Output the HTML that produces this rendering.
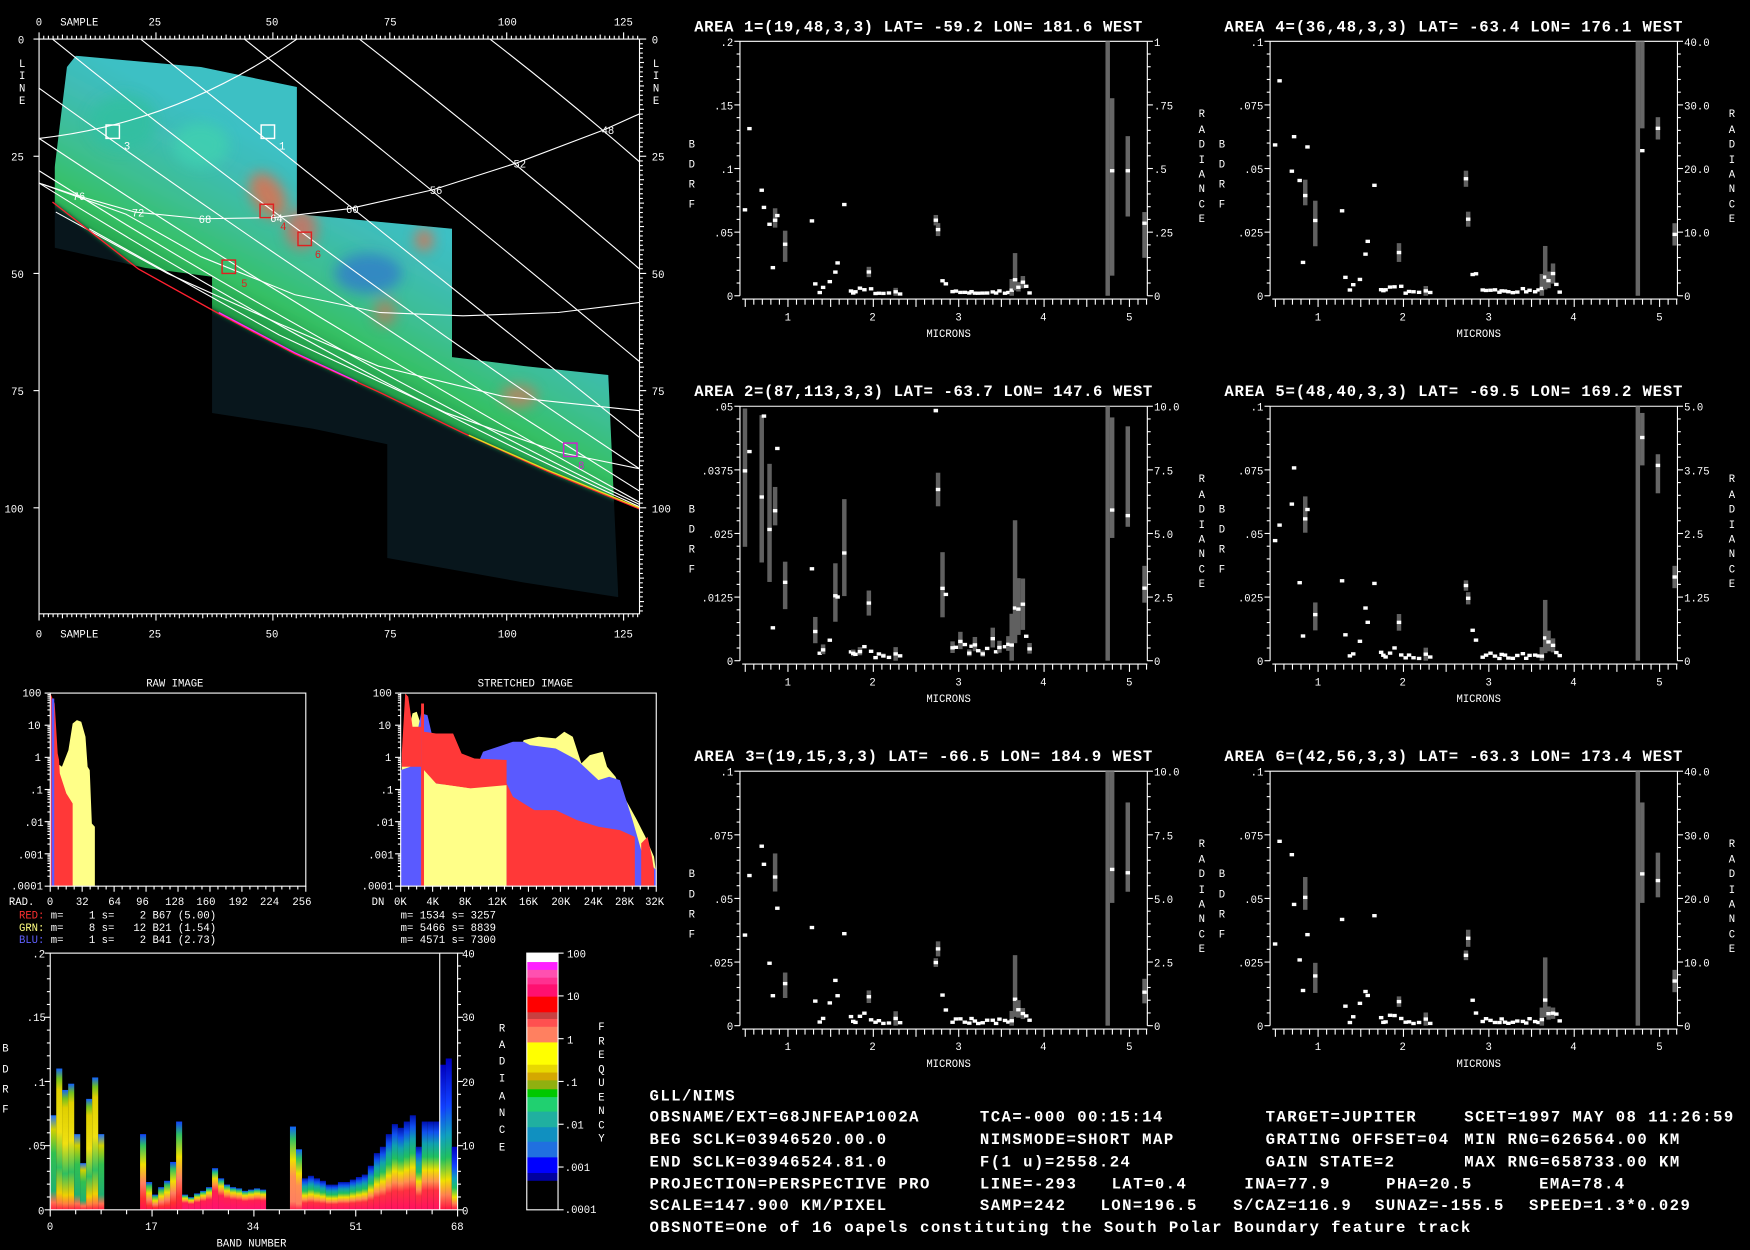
<!DOCTYPE html>
<html><head><meta charset="utf-8"><style>
html,body{margin:0;padding:0;background:#000;overflow:hidden}
svg{display:block}
text{font-family:"Liberation Mono",monospace;fill:#fff}
.s{font-size:9.5px}
.t{font-size:14px;font-weight:bold;letter-spacing:0.55px}
.f{font-size:14px;font-weight:bold;letter-spacing:1.3px}
</style></head><body>
<svg id="sv" width="1750" height="1250" viewBox="0 0 1568 1120" preserveAspectRatio="none" xmlns="http://www.w3.org/2000/svg">
<defs>
<filter id="bl" x="-10%" y="-10%" width="120%" height="120%"><feGaussianBlur stdDeviation="2.2"/></filter>
<filter id="bl2" x="-50%" y="-50%" width="200%" height="200%"><feGaussianBlur stdDeviation="6"/></filter>
<clipPath id="patch"><polygon points="68,50 180,60 266,78 266,192 300,195 405,205 405,320 470,328 545,336 554,535 470,522 347,500 347,398 280,384 190,370 190,248 130,240 49,222 49,150 60,60"/></clipPath>
<clipPath id="above"><polygon points="0,0 600,0 600,456 573,456 490,422 415,388 339,351 264,317 196,281 124,241 47,181 0,170"/></clipPath>
<linearGradient id="lg" gradientUnits="userSpaceOnUse" x1="300" y1="344" x2="375" y2="200">
<stop offset="0" stop-color="#0a3a20"/><stop offset="0.07" stop-color="#1f9a45"/><stop offset="0.25" stop-color="#35c064"/><stop offset="0.5" stop-color="#3cbf90"/><stop offset="0.8" stop-color="#3fbcb5"/><stop offset="1" stop-color="#3cc0c4"/></linearGradient>
<linearGradient id="gA" x1="0" y1="1" x2="0" y2="0"><stop offset="0" stop-color="#ff2040"/><stop offset="0.05" stop-color="#ff8040"/><stop offset="0.12" stop-color="#f0d000"/><stop offset="0.3" stop-color="#30c060"/><stop offset="0.55" stop-color="#f0e010"/><stop offset="0.85" stop-color="#e0d000"/><stop offset="0.93" stop-color="#70c020"/><stop offset="1" stop-color="#1060ff"/></linearGradient>
<linearGradient id="gA2" x1="0" y1="1" x2="0" y2="0"><stop offset="0" stop-color="#ff2040"/><stop offset="0.08" stop-color="#ff7050"/><stop offset="0.2" stop-color="#20b070"/><stop offset="0.6" stop-color="#30c050"/><stop offset="0.85" stop-color="#d0d000"/><stop offset="1" stop-color="#2070ff"/></linearGradient>
<linearGradient id="gB" x1="0" y1="1" x2="0" y2="0"><stop offset="0" stop-color="#ff1050"/><stop offset="0.15" stop-color="#ff3030"/><stop offset="0.35" stop-color="#ff8060"/><stop offset="0.6" stop-color="#f0e000"/><stop offset="0.85" stop-color="#30c060"/><stop offset="1" stop-color="#1040ff"/></linearGradient>
<linearGradient id="gC" x1="0" y1="1" x2="0" y2="0"><stop offset="0" stop-color="#ff1070"/><stop offset="0.45" stop-color="#ff2050"/><stop offset="0.6" stop-color="#ff9040"/><stop offset="0.75" stop-color="#f0e000"/><stop offset="0.9" stop-color="#20c080"/><stop offset="1" stop-color="#1040ff"/></linearGradient>
<linearGradient id="gD" x1="0" y1="1" x2="0" y2="0"><stop offset="0" stop-color="#ff2050"/><stop offset="0.1" stop-color="#ff8060"/><stop offset="0.4" stop-color="#ff9050"/><stop offset="0.6" stop-color="#f0e000"/><stop offset="0.85" stop-color="#30c060"/><stop offset="1" stop-color="#1060ff"/></linearGradient>
<linearGradient id="gE" x1="0" y1="1" x2="0" y2="0"><stop offset="0" stop-color="#ff1060"/><stop offset="0.22" stop-color="#ff3040"/><stop offset="0.32" stop-color="#ff9050"/><stop offset="0.45" stop-color="#f0e000"/><stop offset="0.6" stop-color="#20c060"/><stop offset="0.75" stop-color="#10a0b0"/><stop offset="0.88" stop-color="#1050f0"/><stop offset="1" stop-color="#0010b0"/></linearGradient>
<linearGradient id="gF" x1="0" y1="1" x2="0" y2="0"><stop offset="0" stop-color="#ff1040"/><stop offset="0.1" stop-color="#ff8050"/><stop offset="0.2" stop-color="#f0e000"/><stop offset="0.35" stop-color="#20c060"/><stop offset="0.5" stop-color="#10a0c0"/><stop offset="0.7" stop-color="#1040ff"/><stop offset="1" stop-color="#0000c0"/></linearGradient>
</defs>
<rect width="1568" height="1120" fill="#000"/>

<!-- MAP -->
<g clip-path="url(#patch)">
<rect x="0" y="0" width="600" height="600" fill="#08161c"/>
<g filter="url(#bl)">
<rect x="0" y="0" width="600" height="600" fill="url(#lg)" clip-path="url(#above)"/>
</g>
<g filter="url(#bl2)" clip-path="url(#above)" opacity="0.85">
<ellipse cx="240" cy="175" rx="14" ry="22" fill="#e07050" transform="rotate(-30 240 175)"/>
<ellipse cx="270" cy="205" rx="14" ry="18" fill="#d07060"/>
<ellipse cx="380" cy="215" rx="8" ry="10" fill="#e07050"/>
<ellipse cx="345" cy="280" rx="10" ry="12" fill="#b08060"/>
<ellipse cx="465" cy="355" rx="16" ry="10" fill="#c08060"/>
<ellipse cx="110" cy="110" rx="30" ry="25" fill="#30c0a0"/>
<ellipse cx="180" cy="130" rx="25" ry="20" fill="#40d0b0"/>
<ellipse cx="330" cy="245" rx="30" ry="18" fill="#3080c8"/>
</g>
</g>
<g fill="none" stroke="#fff" stroke-width="1">
<path d="M439 35 Q510 90 573 145"/>
<path d="M322 35 Q450 135 573 241"/>
<path d="M219 35 Q400 180 573 324"/>
<path d="M126 35 Q350 215 573 392"/>
<path d="M47 35 Q300 240 573 420"/>
<path d="M35 79 Q300 270 573 440"/>
<path d="M35 124 Q300 300 573 450"/>
<path d="M35 153 Q300 320 573 452"/>
<path d="M35 164 Q300 330 573 454"/>
<path d="M35 124 Q160 110 266 35"/>
<polyline points="573,102 542,116 463,146 388,170 313,187 245,195 181,196 121,190 68,175 38,165"/>
<polyline points="35,164 113,192 180,230 264,264 340,280 415,283 500,280 573,271"/>
<polyline points="50,190 150,245 250,290 339,328 450,355 573,368"/>
<polyline points="80,205 250,300 400,370 500,405 573,420"/>
</g>
<polyline points="47,181 124,241 196,281 264,317 339,351 415,388 490,422 573,456" fill="none" stroke="#ff2030" stroke-width="1.2"/>
<polyline points="196,280 264,316 320,342" fill="none" stroke="#ff30ff" stroke-width="1.2"/>
<polyline points="420,390 490,421 573,455" fill="none" stroke="#e0e020" stroke-width="1.2"/>
<g fill="none" stroke-width="1.3">
<rect x="95" y="112" width="12" height="12" stroke="#fff"/>
<rect x="234" y="112" width="12" height="12" stroke="#fff"/>
<rect x="233" y="183" width="12" height="12" stroke="#e02020"/>
<rect x="267" y="208" width="12" height="12" stroke="#e02020"/>
<rect x="199" y="233" width="12" height="12" stroke="#e02020"/>
<rect x="505" y="397" width="12" height="12" stroke="#d020d0"/>
</g>
<g class="s">
<text x="111" y="134" fill="#fff">3</text><text x="250" y="134">1</text>
<text x="251" y="206" style="fill:#e02020">4</text><text x="282" y="231" style="fill:#e02020">6</text><text x="216" y="257" style="fill:#e02020">5</text><text x="518" y="420" style="fill:#d020d0">8</text>
<text x="539" y="120">48</text><text x="460" y="150">52</text><text x="385" y="174">56</text><text x="310" y="191">60</text><text x="242" y="199">64</text><text x="178" y="200">68</text><text x="118" y="194">72</text><text x="65" y="179">76</text>
</g>
<rect x="35" y="35" width="538" height="515" fill="none" stroke="#fff" stroke-width="1"/>
<g id="mapticks" stroke="#fff" stroke-width="1"></g>
<g class="s">
<text x="32" y="23">0</text><text x="54" y="23">SAMPLE</text><text x="133" y="23">25</text><text x="238" y="23">50</text><text x="344" y="23">75</text><text x="446" y="23">100</text><text x="550" y="23">125</text>
<text x="32" y="571">0</text><text x="54" y="571">SAMPLE</text><text x="133" y="571">25</text><text x="238" y="571">50</text><text x="344" y="571">75</text><text x="446" y="571">100</text><text x="550" y="571">125</text>
<text x="16" y="39">0</text><text x="10" y="144">25</text><text x="10" y="249">50</text><text x="10" y="354">75</text><text x="4" y="459">100</text>
<text x="584" y="39">0</text><text x="584" y="144">25</text><text x="584" y="249">50</text><text x="584" y="354">75</text><text x="584" y="459">100</text>
<text x="17" y="60">L</text><text x="17" y="71">I</text><text x="17" y="82">N</text><text x="17" y="93">E</text>
<text x="585" y="60">L</text><text x="585" y="71">I</text><text x="585" y="82">N</text><text x="585" y="93">E</text>
</g>

<!-- HISTOGRAMS -->
<g id="hist"></g>
<g fill="none" stroke="#fff"><rect x="45" y="621" width="229" height="173"/><rect x="359" y="621" width="229" height="173"/></g>
<g id="histticks" stroke="#fff"></g>
<g class="s">
<text x="131" y="615">RAW IMAGE</text><text x="428" y="615">STRETCHED IMAGE</text>
<text x="20" y="624">100</text><text x="25" y="653">10</text><text x="31" y="682">1</text><text x="27" y="711">.1</text><text x="22" y="740">.01</text><text x="16" y="769">.001</text><text x="10" y="797">.0001</text>
<text x="334" y="624">100</text><text x="339" y="653">10</text><text x="345" y="682">1</text><text x="341" y="711">.1</text><text x="336" y="740">.01</text><text x="330" y="769">.001</text><text x="324" y="797">.0001</text>
<text x="8" y="811">RAD.</text><text x="42" y="811">0</text><text x="68" y="811">32</text><text x="97" y="811">64</text><text x="122" y="811">96</text><text x="148" y="811">128</text><text x="176" y="811">160</text><text x="205" y="811">192</text><text x="233" y="811">224</text><text x="262" y="811">256</text>
<text x="333" y="811">DN</text><text x="353" y="811">0K</text><text x="382" y="811">4K</text><text x="411" y="811">8K</text><text x="437" y="811">12K</text><text x="465" y="811">16K</text><text x="494" y="811">20K</text><text x="523" y="811">24K</text><text x="551" y="811">28K</text><text x="578" y="811">32K</text>
<text x="17" y="823" xml:space="preserve"><tspan style="fill:#ff3030">RED:</tspan> m=    1 s=    2 B67 (5.00)</text>
<text x="17" y="834" xml:space="preserve"><tspan style="fill:#ffff80">GRN:</tspan> m=    8 s=   12 B21 (1.54)</text>
<text x="17" y="845" xml:space="preserve"><tspan style="fill:#6060ff">BLU:</tspan> m=    1 s=    2 B41 (2.73)</text>
<text x="359" y="823" xml:space="preserve">m= 1534 s= 3257</text>
<text x="359" y="834" xml:space="preserve">m= 5466 s= 8839</text>
<text x="359" y="845" xml:space="preserve">m= 4571 s= 7300</text>
</g>

<!-- BAND SPECTRUM -->
<g id="bands"></g>
<g fill="none" stroke="#fff"><rect x="45" y="854" width="365" height="230"/><line x1="394" y1="854" x2="394" y2="1084"/></g>
<g id="bandticks" stroke="#fff"></g>
<g id="cbar"></g>
<rect x="472" y="854" width="28" height="230" fill="none" stroke="#fff"/>
<g class="s">
<text x="29" y="858">.2</text><text x="24" y="915">.15</text><text x="29" y="973">.1</text><text x="24" y="1030">.05</text><text x="34" y="1088">0</text>
<text x="414" y="858">40</text><text x="414" y="915">30</text><text x="414" y="973">20</text><text x="414" y="1030">10</text><text x="414" y="1088">0</text>
<text x="42" y="1102">0</text><text x="130" y="1102">17</text><text x="221" y="1102">34</text><text x="313" y="1102">51</text><text x="404" y="1102">68</text>
<text x="194" y="1117">BAND NUMBER</text>
<text x="2" y="942">B</text><text x="2" y="961">D</text><text x="2" y="979">R</text><text x="2" y="997">F</text>
<text x="447" y="924">R</text><text x="447" y="939">A</text><text x="447" y="954">D</text><text x="447" y="969">I</text><text x="447" y="985">A</text><text x="447" y="1000">N</text><text x="447" y="1015">C</text><text x="447" y="1031">E</text>
<text x="536" y="923">F</text><text x="536" y="936">R</text><text x="536" y="948">E</text><text x="536" y="961">Q</text><text x="536" y="973">U</text><text x="536" y="986">E</text><text x="536" y="998">N</text><text x="536" y="1011">C</text><text x="536" y="1023">Y</text>
<text x="508" y="858">100</text><text x="508" y="896">10</text><text x="508" y="935">1</text><text x="506" y="973">.1</text><text x="506" y="1011">.01</text><text x="506" y="1049">.001</text><text x="506" y="1087">.0001</text>
</g>

<!-- SPECTRUM PLOTS -->
<g id="plots"></g>
<g class="t">
<text x="622" y="28" textLength="402">AREA 1=(19,48,3,3) LAT= -59.2 LON= 181.6 WEST</text>
<text x="1097" y="28" textLength="411">AREA 4=(36,48,3,3) LAT= -63.4 LON= 176.1 WEST</text>
<text x="622" y="355" textLength="411">AREA 2=(87,113,3,3) LAT= -63.7 LON= 147.6 WEST</text>
<text x="1097" y="355" textLength="411">AREA 5=(48,40,3,3) LAT= -69.5 LON= 169.2 WEST</text>
<text x="622" y="682" textLength="411">AREA 3=(19,15,3,3) LAT= -66.5 LON= 184.9 WEST</text>
<text x="1097" y="682" textLength="411">AREA 6=(42,56,3,3) LAT= -63.3 LON= 173.4 WEST</text>
</g>
<g class="s" text-anchor="end">
<g><text x="657" y="41">.2</text><text x="657" y="98">.15</text><text x="657" y="155">.1</text><text x="657" y="212">.05</text><text x="657" y="269">0</text></g>
<g transform="translate(475,0)"><text x="657" y="41">.1</text><text x="657" y="98">.075</text><text x="657" y="155">.05</text><text x="657" y="212">.025</text><text x="657" y="269">0</text></g>
<g transform="translate(0,327)"><text x="657" y="41">.05</text><text x="657" y="98">.0375</text><text x="657" y="155">.025</text><text x="657" y="212">.0125</text><text x="657" y="269">0</text></g>
<g transform="translate(475,327)"><text x="657" y="41">.1</text><text x="657" y="98">.075</text><text x="657" y="155">.05</text><text x="657" y="212">.025</text><text x="657" y="269">0</text></g>
<g transform="translate(0,654)"><text x="657" y="41">.1</text><text x="657" y="98">.075</text><text x="657" y="155">.05</text><text x="657" y="212">.025</text><text x="657" y="269">0</text></g>
<g transform="translate(475,654)"><text x="657" y="41">.1</text><text x="657" y="98">.075</text><text x="657" y="155">.05</text><text x="657" y="212">.025</text><text x="657" y="269">0</text></g>
</g>
<g class="s">
<g><text x="1034" y="41">1</text><text x="1034" y="98">.75</text><text x="1034" y="155">.5</text><text x="1034" y="212">.25</text><text x="1034" y="269">0</text></g>
<g transform="translate(475,0)"><text x="1034" y="41">40.0</text><text x="1034" y="98">30.0</text><text x="1034" y="155">20.0</text><text x="1034" y="212">10.0</text><text x="1034" y="269">0</text></g>
<g transform="translate(0,327)"><text x="1034" y="41">10.0</text><text x="1034" y="98">7.5</text><text x="1034" y="155">5.0</text><text x="1034" y="212">2.5</text><text x="1034" y="269">0</text></g>
<g transform="translate(475,327)"><text x="1034" y="41">5.0</text><text x="1034" y="98">3.75</text><text x="1034" y="155">2.5</text><text x="1034" y="212">1.25</text><text x="1034" y="269">0</text></g>
<g transform="translate(0,654)"><text x="1034" y="41">10.0</text><text x="1034" y="98">7.5</text><text x="1034" y="155">5.0</text><text x="1034" y="212">2.5</text><text x="1034" y="269">0</text></g>
<g transform="translate(475,654)"><text x="1034" y="41">40.0</text><text x="1034" y="98">30.0</text><text x="1034" y="155">20.0</text><text x="1034" y="212">10.0</text><text x="1034" y="269">0</text></g>
</g>
<g class="s" id="common">
<g><text x="703" y="287">1</text><text x="779" y="287">2</text><text x="856" y="287">3</text><text x="932" y="287">4</text><text x="1009" y="287">5</text><text x="830" y="302">MICRONS</text><text x="617" y="132">B</text><text x="617" y="150">D</text><text x="617" y="168">R</text><text x="617" y="186">F</text><text x="1074" y="105">R</text><text x="1074" y="119">A</text><text x="1074" y="132">D</text><text x="1074" y="146">I</text><text x="1074" y="159">A</text><text x="1074" y="172">N</text><text x="1074" y="186">C</text><text x="1074" y="199">E</text></g>
<g transform="translate(475,0)"><text x="703" y="287">1</text><text x="779" y="287">2</text><text x="856" y="287">3</text><text x="932" y="287">4</text><text x="1009" y="287">5</text><text x="830" y="302">MICRONS</text><text x="617" y="132">B</text><text x="617" y="150">D</text><text x="617" y="168">R</text><text x="617" y="186">F</text><text x="1074" y="105">R</text><text x="1074" y="119">A</text><text x="1074" y="132">D</text><text x="1074" y="146">I</text><text x="1074" y="159">A</text><text x="1074" y="172">N</text><text x="1074" y="186">C</text><text x="1074" y="199">E</text></g>
<g transform="translate(0,327)"><text x="703" y="287">1</text><text x="779" y="287">2</text><text x="856" y="287">3</text><text x="932" y="287">4</text><text x="1009" y="287">5</text><text x="830" y="302">MICRONS</text><text x="617" y="132">B</text><text x="617" y="150">D</text><text x="617" y="168">R</text><text x="617" y="186">F</text><text x="1074" y="105">R</text><text x="1074" y="119">A</text><text x="1074" y="132">D</text><text x="1074" y="146">I</text><text x="1074" y="159">A</text><text x="1074" y="172">N</text><text x="1074" y="186">C</text><text x="1074" y="199">E</text></g>
<g transform="translate(475,327)"><text x="703" y="287">1</text><text x="779" y="287">2</text><text x="856" y="287">3</text><text x="932" y="287">4</text><text x="1009" y="287">5</text><text x="830" y="302">MICRONS</text><text x="617" y="132">B</text><text x="617" y="150">D</text><text x="617" y="168">R</text><text x="617" y="186">F</text><text x="1074" y="105">R</text><text x="1074" y="119">A</text><text x="1074" y="132">D</text><text x="1074" y="146">I</text><text x="1074" y="159">A</text><text x="1074" y="172">N</text><text x="1074" y="186">C</text><text x="1074" y="199">E</text></g>
<g transform="translate(0,654)"><text x="703" y="287">1</text><text x="779" y="287">2</text><text x="856" y="287">3</text><text x="932" y="287">4</text><text x="1009" y="287">5</text><text x="830" y="302">MICRONS</text><text x="617" y="132">B</text><text x="617" y="150">D</text><text x="617" y="168">R</text><text x="617" y="186">F</text><text x="1074" y="105">R</text><text x="1074" y="119">A</text><text x="1074" y="132">D</text><text x="1074" y="146">I</text><text x="1074" y="159">A</text><text x="1074" y="172">N</text><text x="1074" y="186">C</text><text x="1074" y="199">E</text></g>
<g transform="translate(475,654)"><text x="703" y="287">1</text><text x="779" y="287">2</text><text x="856" y="287">3</text><text x="932" y="287">4</text><text x="1009" y="287">5</text><text x="830" y="302">MICRONS</text><text x="617" y="132">B</text><text x="617" y="150">D</text><text x="617" y="168">R</text><text x="617" y="186">F</text><text x="1074" y="105">R</text><text x="1074" y="119">A</text><text x="1074" y="132">D</text><text x="1074" y="146">I</text><text x="1074" y="159">A</text><text x="1074" y="172">N</text><text x="1074" y="186">C</text><text x="1074" y="199">E</text></g>
</g>

<!-- FOOTER -->
<g class="f">
<text x="582" y="986">GLL/NIMS</text>
<text x="582" y="1005">OBSNAME/EXT=G8JNFEAP1002A</text><text x="878" y="1005">TCA=-000 00:15:14</text><text x="1134" y="1005">TARGET=JUPITER</text><text x="1312" y="1005">SCET=1997 MAY 08 11:26:59</text>
<text x="582" y="1025">BEG SCLK=03946520.00.0</text><text x="878" y="1025">NIMSMODE=SHORT MAP</text><text x="1134" y="1025">GRATING OFFSET=04</text><text x="1312" y="1025">MIN RNG=626564.00 KM</text>
<text x="582" y="1045">END SCLK=03946524.81.0</text><text x="878" y="1045">F(1 u)=2558.24</text><text x="1134" y="1045">GAIN STATE=2</text><text x="1312" y="1045">MAX RNG=658733.00 KM</text>
<text x="582" y="1065">PROJECTION=PERSPECTIVE PRO</text><text x="878" y="1065">LINE=-293</text><text x="996" y="1065">LAT=0.4</text><text x="1115" y="1065">INA=77.9</text><text x="1242" y="1065">PHA=20.5</text><text x="1379" y="1065">EMA=78.4</text>
<text x="582" y="1084">SCALE=147.900 KM/PIXEL</text><text x="878" y="1084">SAMP=242</text><text x="986" y="1084">LON=196.5</text><text x="1105" y="1084">S/CAZ=116.9</text><text x="1232" y="1084">SUNAZ=-155.5</text><text x="1370" y="1084">SPEED=1.3*0.029</text>
<text x="582" y="1104">OBSNOTE=One of 16 oapels constituting the South Polar Boundary feature track</text>
</g>
</svg>
<script>
(function(){
var NS='http://www.w3.org/2000/svg';
function el(p,t,a){var e=document.createElementNS(NS,t);for(var k in a)e.setAttribute(k,a[k]);p.appendChild(e);return e;}
function ln(p,x1,y1,x2,y2){return el(p,'line',{x1:x1,y1:y1,x2:x2,y2:y2});}
var mt=document.getElementById('mapticks');
for(var s=0;s<=128;s++){var x=35+s*4.19;var L=(s%25==0)?6:(s%5==0?4:3);ln(mt,x,35,x,35-L);ln(mt,x,550,x,550+L);}
for(var l=0;l<=122;l++){var y=35+l*4.2;var L=(l%25==0)?6:(l%5==0?4:3);ln(mt,573,y,573+L,y);if(l%25==0)ln(mt,35,y,30,y);}
var h=document.getElementById('hist');
function P(arr,c){var s=arr.map(function(p){return (p[0]*0.383).toFixed(1)+','+(600.4+p[1]*0.2987).toFixed(1)}).join(' ');el(h,'polygon',{points:s,fill:c});}
var Y='#ffff88',R='#ff3838',B='#5a5aff';
P([[123,647],[123,285],[140,285],[145,290],[160,240],[170,160],[180,150],[190,155],[200,200],[205,290],[210,300],[215,460],[222,470],[222,647]],Y);
P([[118,647],[118,70],[128,100],[135,250],[138,270],[140,310],[155,370],[170,400],[170,647]],R);
P([[121,647],[121,85],[127,85],[127,647]],B);
P([[940,647],[940,280],[965,130],[975,125],[990,185],[1010,190],[1025,340],[1100,350],[1185,340],[1225,210],[1260,200],[1300,205],[1320,185],[1340,200],[1360,280],[1380,255],[1410,245],[1420,290],[1440,320],[1460,380],[1490,450],[1510,500],[1530,560],[1535,610],[1535,647]],Y);
P([[937,647],[937,300],[960,290],[985,130],[1000,135],[1010,190],[1020,320],[1040,350],[1100,355],[1115,290],[1130,245],[1200,215],[1225,215],[1240,225],[1300,235],[1350,270],[1400,330],[1425,320],[1450,330],[1480,450],[1500,540],[1520,580],[1535,600],[1535,647]],B);
P([[940,250],[948,70],[955,80],[965,170],[985,170],[985,290],[960,290],[940,290]],R);
P([[985,647],[985,100],[992,100],[992,647]],R);
P([[992,185],[1020,190],[1060,190],[1080,250],[1110,265],[1185,270],[1185,360],[1100,355],[1020,340],[992,330]],R);
P([[992,647],[992,300],[1020,340],[1100,355],[1185,345],[1185,647]],Y);
P([[1185,647],[1185,340],[1200,380],[1250,420],[1300,420],[1350,450],[1400,470],[1450,480],[1485,500],[1485,647]],R);
P([[1500,647],[1500,520],[1515,500],[1525,560],[1530,600],[1530,647]],R);
var ht=document.getElementById('histticks');
[45,359].forEach(function(x0){
 for(var d=0;d<6;d++){var y0=621+d*28.8;ln(ht,x0,y0,x0-5,y0);[2,3,4,5,6,7,8,9].forEach(function(k){var y=y0+28.8*(1-Math.log10(k));ln(ht,x0,y,x0-2.5,y);});}
 ln(ht,x0,794,x0-5,794);
 for(var i=0;i<=32;i++){var x=x0+i*229/32;ln(ht,x,794,x,794+(i%4==0?5:3));}
});
var bd=document.getElementById('bands');
var hs={0:.075,1:.112,2:.095,3:.1,4:.06,5:.037,6:.088,7:.105,8:.06,15:.06,16:.022,17:.012,18:.018,19:.023,20:.038,21:.07,22:.012,23:.01,24:.013,25:.015,26:.018,27:.033,28:.025,29:.02,30:.018,31:.017,32:.015,33:.016,34:.017,35:.016,40:.066,41:.048,42:.025,43:.027,44:.025,45:.023,46:.02,47:.02,48:.022,49:.022,50:.024,51:.026,52:.028,53:.035,54:.045,55:.05,56:.06,57:.068,58:.065,59:.07,60:.075,61:.05,62:.07,63:.07,64:.07,65:.115,66:.12,67:.05};
for(var b in hs){b=+b;var v=hs[b];var g='gE';
 if(b<=8)g=(b==0||b==4||b==5||b==8)?'gA2':'gA';else if(b<=21)g='gB';else if(b<=35)g='gC';else if(b<=41)g='gD';else if(b>=65)g='gF';
 var hh=v*1130;el(bd,'rect',{x:(45+b*5.37).toFixed(1),y:(1084-hh).toFixed(1),width:5.4,height:hh.toFixed(1),fill:'url(#'+g+')'});}
var bt=document.getElementById('bandticks');
for(var i=0;i<=16;i++){var x=45+i*365/16;ln(bt,x,1084,x,1084+(i%4==0?6:4));}
for(var i=0;i<=20;i++){var y=854+i*11.5;var L=(i%5==0)?5:3;ln(bt,45,y,45-L,y);ln(bt,410,y,410+L,y);}
var cb=document.getElementById('cbar');
var cs=[['#ffffff',854,862],['#ff20ff',862,869],['#ff50b0',869,876],['#ff3090',876,882],['#ff1070',882,893],['#ff0000',893,907],['#c84040',907,913],['#ff5050',913,920],['#ff8060',920,934],['#ffff00',934,954],['#e8d800',954,961],['#d4a800',961,968],['#90b010',968,976],['#00c800',976,983],['#20d070',983,996],['#20b0a0',996,1010],['#1090c0',1010,1023],['#2070e0',1023,1037],['#0000ff',1037,1051],['#0000a0',1051,1058],['#000000',1058,1084]];
cs.forEach(function(c){el(cb,'rect',{x:472,y:c[1],width:28,height:c[2]-c[1]+0.5,fill:c[0]});});
for(var i=0;i<=6;i++){var y=854+i*38.33;var t=ln(cb,500,y,505,y);t.setAttribute('stroke','#fff');}
var pg=document.getElementById('plots');
var base=[[4,77],[8,120],[19,101],[21,103],[26,57],[29,21],[31,82,74,95],[33,85],[40,38,25,48],[64,61],[67,14],[71,3],[74,6],[80,13],[85,28],[87,27],[93,67],[99,5],[101,3],[103,3],[107,6],[111,7],[115,23,18,28],[117,5],[121,2],[124,3],[128,2],[133,2],[139,4,0,8],[143,2],[175,58,54,62],[177,51,46,56],[181,17],[184,12],[190,3],[193,4],[197,4],[201,3],[205,2],[207,4],[210,3],[213,2],[217,2],[221,3],[226,4],[229,2],[232,4],[237,3],[240,3],[243,4,0,12],[246,15,5,40],[249,10,5,16],[253,11,6,16],[256,7],[259,3]];
var cfg=[[0,0,1.0,[[329,0,228,null],[333,18,177,112],[347,71,143,112],[362,34,75,65]]],
 [475,0,1.45,[[329,0,228,null],[333,150,228,130],[347,140,160,150],[362,45,65,55]]],
 [0,327,1.8,[[329,0,228,null],[333,110,218,135],[347,120,210,130],[362,52,85,65]]],
 [475,327,1.35,[[329,0,228,null],[333,175,222,200],[347,150,185,175],[362,65,85,75]]],
 [0,654,1.3,[[329,0,228,null],[333,110,228,140],[347,120,200,137],[362,20,42,30]]],
 [475,654,1.25,[[329,0,228,null],[333,110,200,136],[347,115,155,130],[362,30,50,40]]]];
cfg.forEach(function(c,pi){
 var g=el(pg,'g',{transform:'translate('+c[0]+','+c[1]+')'});
 var L=el(g,'g',{stroke:'#fff',fill:'none'});
 ln(L,663,37,1028,37);ln(L,663,37,663,265);ln(L,1028,37,1028,265);ln(L,665,268,1028,268);
 for(var i=0;i<=20;i++){var y=37+i*11.4;var k=(i%5==0)?5:3;ln(L,663,y,663-k,y);ln(L,1028,y,1028+k,y);}
 for(var n=5;n<=52;n++){var m=n/10;var x=706+(m-1)*76.5;var big=(n%5==0);ln(L,x,268,x,268+(big?7:5));}
 var k=c[2];
 base.forEach(function(p,i){
  var f=k*(1+0.25*Math.sin(i*1.7+pi));
  if(pi==2&&p[0]>170&&p[0]<260){f*=2.2;}
  var v=Math.min(224,p[1]*f);
  var yy=265-v;
  if(p.length>2||(pi==2&&i%2==0)){var lo=p.length>2?p[2]*f:v*0.6,hi=p.length>2?p[3]*f:v*1.5;hi=Math.min(226,hi);el(g,'rect',{x:663+p[0]-1.5,y:265-hi,width:4,height:Math.max(2,hi-lo),fill:'#606060'});}
  el(g,'rect',{x:663+p[0]-1.5,y:yy-1.5,width:4,height:3,fill:'#fff'});
 });
 c[3].forEach(function(b){el(g,'rect',{x:663+b[0]-1.5,y:265-b[2],width:4,height:b[2]-b[1],fill:'#666'});if(b[3]!=null)el(g,'rect',{x:663+b[0]-1.5,y:265-b[3]-1.5,width:4,height:3,fill:'#fff'});});
});
})();
</script>
</body></html>
